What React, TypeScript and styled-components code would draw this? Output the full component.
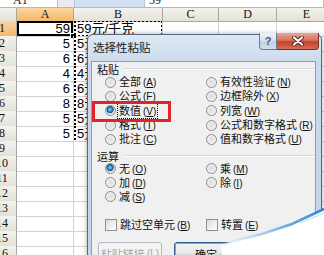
import styled, { createGlobalStyle, css } from 'styled-components';

const GlobalStyle = createGlobalStyle`
  * {
    box-sizing: border-box;
  }

  html,
  body {
    margin: 0;
    padding: 0;
    background: #fff;
    overflow: hidden;
  }
`;

const COLS = '29px 57px 89px 56px 58px 60px';
const CJK = "'Noto Sans CJK SC', sans-serif";

const Screen = styled.div`
  position: relative;
  width: 324px;
  height: 255px;
  overflow: hidden;
  background: #fff;
  font-family: ${CJK};
`;

/* ---------- worksheet ---------- */

const Sheet = styled.div`
  display: flex;
  flex-direction: column;
`;

const FormulaStrip = styled.div`
  display: flex;
  height: 8px;
  overflow: hidden;
  border-bottom: 1px solid #b7b7b7;
  font-family: 'Liberation Serif', serif;
  font-size: 12px;
`;

const StripPart = styled.div<{ $w?: number; $bg: string }>`
  ${(p) => (p.$w ? `width: ${p.$w}px;` : 'flex: 1;')}
  background: ${(p) => p.$bg};
  border-right: 1px solid #b9c3d0;
  padding-left: 4px;
  line-height: 14px;
  margin-top: -7px;
  height: 15px;
  color: #222;
`;

const GridRow = styled.div<{ $h: number }>`
  display: grid;
  grid-template-columns: ${COLS};
  margin-left: -12px;
  height: ${(p) => p.$h}px;
`;

const Head = styled.div<{ $selected?: boolean }>`
  background: ${(p) => (p.$selected ? 'linear-gradient(#fbd6a0, #f6b66a)' : 'linear-gradient(#f3f2ec, #e4e2d8)')};
  border-right: 1px solid #a8a8a0;
  border-bottom: 1px solid #a8a8a0;
  font-family: 'Liberation Serif', serif;
  font-size: 12px;
  line-height: 13px;
  color: #111;
  text-align: center;
`;

const RowHead = styled(Head)`
  line-height: 15px;
  border-bottom-color: #c9c8c0;
`;

const marquee = (mode: 'full' | 'left') =>
  mode === 'full'
    ? css`
        background-image: repeating-linear-gradient(to bottom, #000 0 2px, transparent 2px 4px),
          repeating-linear-gradient(to right, #000 0 2px, transparent 2px 4px),
          repeating-linear-gradient(to bottom, #000 0 2px, transparent 2px 4px),
          repeating-linear-gradient(to right, #000 0 2px, transparent 2px 4px);
        background-size: 2px 100%, 100% 1px, 1px 100%, 100% 1px;
        background-position: left top, left top, right top, left bottom;
        background-repeat: no-repeat;
      `
    : css`
        background-image: repeating-linear-gradient(to bottom, #000 0 2px, transparent 2px 4px);
        background-size: 2px 100%;
        background-position: left top;
        background-repeat: no-repeat;
      `;

const Cell = styled.div<{ $right?: boolean; $active?: boolean; $marquee?: 'full' | 'left' }>`
  position: relative;
  border-right: 1px solid #d2d2d2;
  border-bottom: 1px solid #d2d2d2;
  padding: 0 3px;
  font-family: 'Liberation Sans', ${CJK};
  font-size: 13px;
  line-height: 15px;
  white-space: nowrap;
  text-align: ${(p) => (p.$right ? 'right' : 'left')};
  color: #000;
  ${(p) => p.$active && 'box-shadow: inset 0 0 0 2px #000;'}
  ${(p) => p.$marquee && marquee(p.$marquee)}
`;

const FillHandle = styled.span`
  position: absolute;
  right: -3px;
  bottom: -3px;
  width: 6px;
  height: 6px;
  background: #000;
  border: 1px solid #fff;
`;

/* ---------- dialog ---------- */

const Dialog = styled.div`
  position: absolute;
  left: 87px;
  top: 34px;
  width: 235px;
  height: 240px;
  display: flex;
  flex-direction: column;
  padding: 0 5px 0 3px;
  border: 1px solid #56677f;
  border-radius: 6px 6px 0 0;
  background: linear-gradient(#dde8f4, #cbdaec 28px, #c2d3e8);
  box-shadow: 0 0 5px rgba(0, 0, 0, 0.35);
`;

const TitleBar = styled.div`
  display: flex;
  justify-content: space-between;
  align-items: flex-start;
  height: 26px;
`;

const Title = styled.div`
  padding: 5px 0 0 2px;
  font-size: 11.5px;
  line-height: 14px;
  color: #1b1b1b;
`;

const CaptionButtons = styled.div`
  display: flex;
  margin: -2px -3px 0 0;
`;

const CaptionButton = styled.div<{ $close?: boolean }>`
  display: flex;
  align-items: center;
  justify-content: center;
  height: 17px;
  width: ${(p) => (p.$close ? 42 : 18)}px;
  border: 1px solid ${(p) => (p.$close ? '#6e3228' : '#6b7b92')};
  border-top: none;
  border-left-width: ${(p) => (p.$close ? 0 : 1)}px;
  border-radius: ${(p) => (p.$close ? '0 0 4px 0' : '0 0 0 4px')};
  background: ${(p) =>
    p.$close
      ? 'linear-gradient(#e9a597, #d8735f 45%, #c3432c 55%, #d66c55)'
      : 'linear-gradient(#eef3f9, #d7e1ee 45%, #c3d1e3 55%, #d3deec)'};
  font-family: 'Liberation Sans', sans-serif;
  font-weight: bold;
  font-size: 11px;
  color: #4b5a70;
`;

const Client = styled.div`
  position: relative;
  flex: 1;
  display: flex;
  flex-direction: column;
  background: #f0f0f0;
  border: 1px solid #8d9db3;
  border-bottom: none;
  font-size: 11px;
  color: #111;
`;

const SectionHead = styled.div<{ $gap?: number }>`
  display: flex;
  align-items: center;
  height: 14px;
  padding-left: 5px;
  margin-top: ${(p) => p.$gap ?? 0}px;
  line-height: 14px;
`;

const SectionLine = styled.div`
  flex: 1;
  height: 2px;
  margin-left: 4px;
  border-top: 1px solid #d5dde4;
  border-bottom: 1px solid #fff;
`;

const OptionGrid = styled.div<{ $rows: number; $row: number; $gap: number }>`
  display: grid;
  grid-template-columns: 101px 1fr;
  grid-template-rows: repeat(${(p) => p.$rows}, ${(p) => p.$row}px);
  grid-auto-flow: column;
  padding-left: 13px;
  margin-top: ${(p) => p.$gap}px;
`;

const Option = styled.div`
  display: flex;
  align-items: center;
  gap: 2px;
  white-space: nowrap;
  line-height: 14px;
`;

const Label = styled.span<{ $focus?: boolean }>`
  padding: 0 1px;
  line-height: 13px;
  ${(p) => p.$focus && 'outline: 1px dotted #000; outline-offset: 0;'}
`;

const Key = styled.span`
  font-family: 'Liberation Sans', sans-serif;
  font-size: 10px;
  margin-left: 2px;
`;

const Radio = styled.span<{ $checked?: boolean }>`
  flex: none;
  width: 11px;
  height: 11px;
  border-radius: 50%;
  border: 1px solid #8b8b8b;
  background: ${(p) =>
    p.$checked
      ? 'radial-gradient(circle at 45% 40%, #a8defa 0, #2c8ccc 1.8px, #185b8e 3.4px, #dcdcdc 3.9px, #f8f8f8 100%)'
      : 'radial-gradient(circle at 50% 45%, #dcdcdc 0, #ececec 55%, #fbfbfb 100%)'};
`;

const CheckGrid = styled.div`
  display: grid;
  grid-template-columns: 101px 1fr;
  height: 14px;
  padding-left: 13px;
  margin-top: 14px;
`;

const CheckBox = styled.span`
  flex: none;
  width: 12px;
  height: 12px;
  border: 1px solid #8e8f8f;
  background: linear-gradient(135deg, #d8d8d8, #f6f6f6 70%, #fdfdfd);
`;

const ButtonRow = styled.div`
  display: flex;
  gap: 12px;
  margin: 10px 0 0 6px;
`;

const PushButton = styled.div<{ $disabled?: boolean; $default?: boolean }>`
  display: flex;
  align-items: center;
  justify-content: center;
  width: 64px;
  height: 23px;
  border-radius: 3px;
  border: 1px solid ${(p) => (p.$disabled ? '#b5b8bb' : '#2f5f8c')};
  background: ${(p) =>
    p.$disabled ? '#f4f4f4' : 'linear-gradient(#f4f4f4, #e9e9e9 45%, #dadada 55%, #cfcfcf)'};
  box-shadow: ${(p) => (p.$default ? 'inset 0 0 0 1px #5fb4e8' : 'none')};
  color: ${(p) => (p.$disabled ? '#a2a2a2' : '#111')};
  white-space: nowrap;
`;

const Highlight = styled.div`
  position: absolute;
  left: 0;
  top: 39px;
  width: 79px;
  height: 21px;
  border: 3px solid #e3232a;
  pointer-events: none;
`;

const Curl = styled.svg`
  position: absolute;
  left: 0;
  top: 0;
  pointer-events: none;
`;

type Opt = { text: string; key: string; checked?: boolean; focus?: boolean };

const pasteOpts: Opt[] = [
  { text: '全部', key: 'A' },
  { text: '公式', key: 'F' },
  { text: '数值', key: 'V', checked: true, focus: true },
  { text: '格式', key: 'T' },
  { text: '批注', key: 'C' },
  { text: '有效性验证', key: 'N' },
  { text: '边框除外', key: 'X' },
  { text: '列宽', key: 'W' },
  { text: '公式和数字格式', key: 'R' },
  { text: '值和数字格式', key: 'U' },
];

const opOpts: Opt[] = [
  { text: '无', key: 'O', checked: true },
  { text: '加', key: 'D' },
  { text: '减', key: 'S' },
  { text: '乘', key: 'M' },
  { text: '除', key: 'I' },
];

const aValues = ['59', '5', '6', '4', '6', '8', '5', '5'];

function Mnemonic({ k }: { k: string }) {
  return (
    <Key>
      (<u>{k}</u>)
    </Key>
  );
}

function RadioOption({ opt }: { opt: Opt }) {
  return (
    <Option>
      <Radio $checked={opt.checked} />
      <Label $focus={opt.focus}>
        {opt.text}
        <Mnemonic k={opt.key} />
      </Label>
    </Option>
  );
}

export default function App() {
  const rows = Array.from({ length: 16 }, (_, i) => i + 1);

  return (
    <Screen>
      <GlobalStyle />
      <Sheet>
        <FormulaStrip>
          <StripPart $w={58} $bg="#fff">
            &nbsp;&nbsp;&nbsp;A1
          </StripPart>
          <StripPart $w={17} $bg="#e9ebee" />
          <StripPart $w={70} $bg="#d3e1f2" />
          <StripPart $bg="#fff">59</StripPart>
        </FormulaStrip>
        <GridRow $h={13}>
          <Head />
          <Head $selected>A</Head>
          <Head>B</Head>
          <Head>C</Head>
          <Head>D</Head>
          <Head>E</Head>
        </GridRow>
        {rows.map((r) => {
          const a = aValues[r - 1];
          return (
            <GridRow key={r} $h={15}>
              <RowHead $selected={r === 1}>{r}</RowHead>
              <Cell $right $active={r === 1}>
                {a}
                {r === 1 && <FillHandle />}
              </Cell>
              <Cell $marquee={r === 1 ? 'full' : a ? 'left' : undefined}>
                {a ? `${a}元/千克` : ''}
              </Cell>
              <Cell />
              <Cell />
              <Cell />
            </GridRow>
          );
        })}
      </Sheet>

      <Dialog>
        <TitleBar>
          <Title>选择性粘贴</Title>
          <CaptionButtons>
            <CaptionButton>?</CaptionButton>
            <CaptionButton $close>
              <svg width="14" height="10" viewBox="0 0 14 10">
                <path d="M3 1.5 L11 8.5 M11 1.5 L3 8.5" stroke="#5b2118" strokeWidth="4" strokeLinecap="round" />
                <path d="M3 1.5 L11 8.5 M11 1.5 L3 8.5" stroke="#fff" strokeWidth="2.2" strokeLinecap="round" />
              </svg>
            </CaptionButton>
          </CaptionButtons>
        </TitleBar>
        <Client>
          <SectionHead>
            粘贴
            <SectionLine />
          </SectionHead>
          <OptionGrid $rows={5} $row={14.3} $gap={-1}>
            {pasteOpts.map((o) => (
              <RadioOption key={o.key} opt={o} />
            ))}
          </OptionGrid>
          <SectionHead $gap={2.5}>
            运算
            <SectionLine />
          </SectionHead>
          <OptionGrid $rows={3} $row={14.2} $gap={-1.5}>
            {opOpts.map((o) => (
              <RadioOption key={o.key} opt={o} />
            ))}
          </OptionGrid>
          <CheckGrid>
            <Option>
              <CheckBox />
              <Label>
                跳过空单元
                <Mnemonic k="B" />
              </Label>
            </Option>
            <Option>
              <CheckBox />
              <Label>
                转置
                <Mnemonic k="E" />
              </Label>
            </Option>
          </CheckGrid>
          <ButtonRow>
            <PushButton $disabled>
              粘贴链接
              <Mnemonic k="L" />
            </PushButton>
            <PushButton $default>确定</PushButton>
          </ButtonRow>
          <Highlight />
        </Client>
      </Dialog>

      <Curl width="324" height="255" viewBox="0 0 324 255">
        <defs>
          <linearGradient id="edge" x1="0" y1="0" x2="1" y2="0">
            <stop offset="0" stopColor="#cfe3f5" stopOpacity="0.3" />
            <stop offset="0.6" stopColor="#6fb0e4" />
            <stop offset="1" stopColor="#2f86d2" />
          </linearGradient>
        </defs>
        <polygon points="222,255 221,245 234,241 262,234 292,224 324,209 324,255" fill="#fff" />
        <path d="M222 245 L234 241 L262 234 L292 224 L324 209" fill="none" stroke="url(#edge)" strokeWidth="2.5" />
        <path d="M300 223 L324 213" stroke="#8cc2ec" strokeWidth="1" opacity="0.6" />
      </Curl>
    </Screen>
  );
}
